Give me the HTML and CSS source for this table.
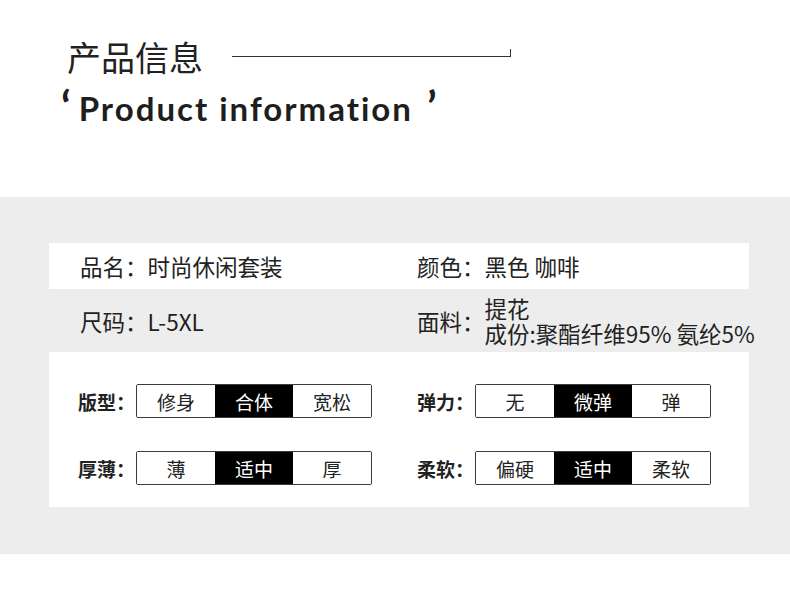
FILE: index.html
```html
<!DOCTYPE html>
<html lang="zh-CN">
<head>
<meta charset="utf-8">
<title>产品信息</title>
<link rel="stylesheet" href="styles.css">
</head>
<body>
<header class="head">
  <div class="title-row">
    <h1 class="title-cn">产品信息</h1>
    <span class="title-line"></span>
  </div>
  <p class="title-en"><span class="q q-open">‘</span>Product information<span class="q q-close">’</span></p>
</header>
<section class="info">
  <div class="row row-white">
    <div class="cell cell-left">品名：时尚休闲套装</div>
    <div class="cell">颜色：黑色 咖啡</div>
  </div>
  <div class="row row-gray">
    <div class="cell cell-left">尺码：L-5XL</div>
    <div class="cell cell-fabric"><span class="k">面料：</span><span class="multi"><span class="ln">提花</span><span class="ln">成份:聚酯纤维95% 氨纶5%</span></span></div>
  </div>
  <div class="scales">
    <div class="scale scale-left">
      <span class="scale-label">版型：</span>
      <div class="seg"><span>修身</span><span class="on">合体</span><span>宽松</span></div>
    </div>
    <div class="scale">
      <span class="scale-label">弹力：</span>
      <div class="seg"><span>无</span><span class="on">微弹</span><span>弹</span></div>
    </div>
    <div class="scale scale-left">
      <span class="scale-label">厚薄：</span>
      <div class="seg"><span>薄</span><span class="on">适中</span><span>厚</span></div>
    </div>
    <div class="scale">
      <span class="scale-label">柔软：</span>
      <div class="seg"><span>偏硬</span><span class="on">适中</span><span>柔软</span></div>
    </div>
  </div>
</section>
</body>
</html>
```
FILE: styles.css
```css
* { box-sizing: border-box; }
html, body { margin: 0; padding: 0; background: #fff; }
body {
  width: 790px;
  height: 589px;
  overflow: hidden;
  font-family: "Noto Sans CJK SC", "Noto Sans", sans-serif;
  color: #222;
}
.head {
  height: 197px;
  padding-top: 40px;
}
.title-row {
  display: flex;
  align-items: center;
  height: 34px;
  padding-left: 67px;
}
.title-cn {
  margin: 0;
  font-size: 34px;
  line-height: 34px;
  font-weight: 400;
  color: #222;
}
.title-line {
  width: 279px;
  height: 8px;
  margin-left: 29px;
  margin-bottom: 8px;
  border-right: 1px solid #333;
  border-bottom: 1px solid #333;
}
.title-en {
  margin: 14px 0 0 0;
  padding-left: 61px;
  font-family: "Lato", "Noto Sans", sans-serif;
  font-weight: 700;
  font-size: 33px;
  letter-spacing: 2px;
  line-height: 40px;
  color: #1e1e1e;
  white-space: nowrap;
}
.q {
  display: inline-block;
  font-size: 44px;
  line-height: 40px;
  vertical-align: top;
  margin-top: -2px;
  letter-spacing: 0;
}
.q-open { margin-right: 8px; }
.q-close { margin-left: 14px; }
.info {
  background: #ededed;
  padding: 46px 41px 47px 49px;
}
.row {
  display: grid;
  grid-template-columns: 368px 1fr;
  align-items: center;
  font-size: 22.5px;
  color: #222;
  white-space: nowrap;
}
.row-white { background: #fff; height: 46px; }
.row-gray { height: 63px; }
.cell-left { padding-left: 31px; }
.cell-fabric {
  display: flex;
  align-items: center;
}
.multi {
  display: flex;
  flex-direction: column;
}
.ln {
  display: block;
  height: 25px;
  line-height: 25px;
}
.scales {
  background: #fff;
  height: 155px;
  padding: 32px 0 0 0;
  display: grid;
  grid-template-columns: 368px 1fr;
  align-content: start;
  row-gap: 33px;
}
.scale {
  display: flex;
  align-items: center;
}
.scale-left { padding-left: 29px; }
.scale-label {
  width: 58px;
  font-size: 19px;
  font-weight: 700;
  color: #222;
  white-space: nowrap;
}
.seg {
  display: flex;
  width: 236px;
  height: 34px;
  border: 1px solid #3c3c3c;
  border-radius: 2px;
  overflow: hidden;
}
.seg span {
  flex: 1;
  display: flex;
  align-items: center;
  justify-content: center;
  font-size: 19px;
  color: #222;
  background: #fff;
}
.seg span.on {
  background: #000;
  color: #fff;
}
```
